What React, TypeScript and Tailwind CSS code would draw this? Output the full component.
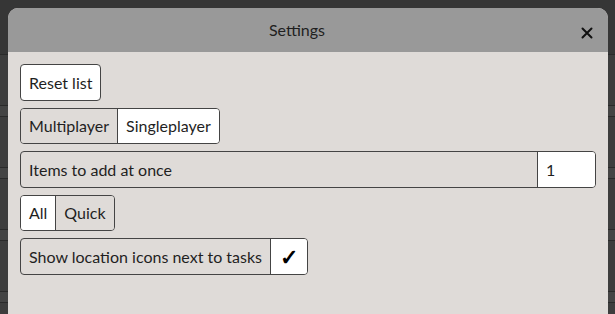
import { useState } from 'react'

const font = { fontFamily: 'Lato, "Noto Sans", sans-serif' }

export default function App() {
  const [mode, setMode] = useState<'multi' | 'single'>('single')
  const [filter, setFilter] = useState<'all' | 'quick'>('all')
  const [count, setCount] = useState('1')
  const [showIcons, setShowIcons] = useState(true)

  const seg = (on: boolean) =>
    `h-full px-2 ${on ? 'bg-white' : 'bg-[#dfdbd8]'}`

  return (
    <div className="relative h-[314px] w-[615px] overflow-hidden bg-[#363636]" style={font}>
      {/* page behind the dialog */}
      <div className="flex flex-col pt-[54px]">
        {[0, 1, 2, 3, 4].map((i) => (
          <div key={i} className="flex flex-col">
            <div className="h-[51px] border-t border-[#2a2a2a] bg-[#3d3d3d]" />
            <div className="h-[11px] border-t border-[#2a2a2a] bg-[#444444]" />
          </div>
        ))}
      </div>

      {/* dialog */}
      <div className="absolute left-2 top-2 flex h-[320px] w-[600px] flex-col overflow-hidden rounded-t-[10px] bg-[#dfdbd8] text-[16px] text-[#1f1f1f]">
        <div className="flex h-[44px] items-center bg-[#999999]">
          <div className="flex-1 pl-[10px] text-center text-[16px]">Settings</div>
          <button className="mr-[10px] mt-[6px] flex h-[22px] w-[22px] items-center justify-center text-[#111]">
            <svg width="12" height="12" viewBox="0 0 12 12" stroke="currentColor" strokeWidth="2" strokeLinecap="round">
              <path d="M1.5 1.5 L10.5 10.5 M10.5 1.5 L1.5 10.5" />
            </svg>
          </button>
        </div>

        <div className="flex flex-col items-start gap-[7px] px-[12px] pt-[12px]">
          <button className="h-[37px] rounded-[4px] border border-[#444] bg-white px-[8px]">Reset list</button>

          <div className="flex h-[36px] overflow-hidden rounded-[4px] border border-[#444]">
            <button className={seg(mode === 'multi') + ' border-r border-[#444]'} onClick={() => setMode('multi')}>
              Multiplayer
            </button>
            <button className={seg(mode === 'single')} onClick={() => setMode('single')}>
              Singleplayer
            </button>
          </div>

          <div className="flex h-[37px] w-[576px] overflow-hidden rounded-[4px] border border-[#444]">
            <div className="flex flex-1 items-center border-r border-[#444] px-[8px]">Items to add at once</div>
            <input
              className="w-[57px] bg-white px-[8px] outline-none"
              value={count}
              onChange={(e) => setCount(e.target.value)}
            />
          </div>

          <div className="flex h-[36px] overflow-hidden rounded-[4px] border border-[#444]">
            <button className={seg(filter === 'all') + ' border-r border-[#444]'} onClick={() => setFilter('all')}>
              All
            </button>
            <button className={seg(filter === 'quick')} onClick={() => setFilter('quick')}>
              Quick
            </button>
          </div>

          <div className="flex h-[37px] overflow-hidden rounded-[4px] border border-[#444]">
            <div className="flex items-center border-r border-[#444] px-[8px]">Show location icons next to tasks</div>
            <button
              className="flex w-[36px] items-center justify-center bg-white text-[22px] font-bold text-black"
              onClick={() => setShowIcons(!showIcons)}
            >
              {showIcons ? '✓' : ''}
            </button>
          </div>
        </div>
      </div>
    </div>
  )
}
